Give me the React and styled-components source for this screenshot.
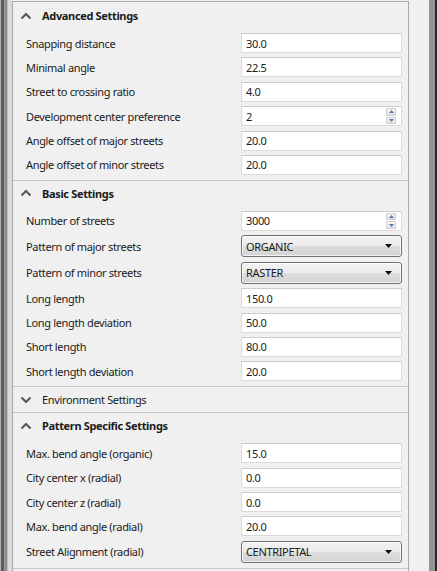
import React from 'react'
import styled, { createGlobalStyle } from 'styled-components'

const GlobalStyle = createGlobalStyle`
  html, body {
    margin: 0;
    padding: 0;
    background: #f0f0f0;
  }
  * { box-sizing: border-box; }
`

const Page = styled.div`
  display: flex;
  width: 437px;
  height: 571px;
  overflow: hidden;
  font-family: "Noto Sans", "Open Sans", sans-serif;
  font-size: 11px;
  letter-spacing: -0.34px;
  color: #1a1a1a;
  background: #f0f0f0;
`

const LeftEdge = styled.div`
  width: 12px;
  flex-shrink: 0;
  background: linear-gradient(
    to right,
    #b4b4b4 0px, #b4b4b4 1px,
    #5c5c5c 1px, #5c5c5c 4px,
    #9a9a9a 4px, #9a9a9a 5px,
    #8c8c8c 5px, #8c8c8c 7px,
    #bdbdbd 7px, #bdbdbd 8px,
    #dcdcdc 8px
  );
`

const Panel = styled.div`
  width: 397px;
  flex-shrink: 0;
  margin-top: 1px;
  padding-top: 1px;
  border: 1px solid #a9a9a9;
  border-bottom: none;
  background: #f0f0f0;
  overflow: hidden;
`

const RightGutter = styled.div`
  width: 20px;
  flex-shrink: 0;
  background: #f0f0f0;
`

const ScrollStrip = styled.div`
  width: 6px;
  flex-shrink: 0;
  background: repeating-linear-gradient(to bottom, #8f8f8f 0px, #8f8f8f 1px, #999 1px, #999 2px);
`

const DarkEdge = styled.div`
  flex: 1;
  background: #2a2a2a;
`

const Section = styled.section`
  border-bottom: 1px solid #c6c6c6;
`

const Header = styled.div`
  display: flex;
  align-items: center;
  height: 25px;
  padding-left: 7px;
  gap: 10px;
  font-weight: ${p => (p.$open ? 700 : 400)};
  color: #1a1a1a;
`

const Chevron = styled.svg`
  width: 12px;
  height: 8px;
  flex-shrink: 0;
`

const Fields = styled.div`
  display: flex;
  flex-direction: column;
  gap: 4.4px;
  padding: 5px 0 5px;
`

const Row = styled.div`
  display: grid;
  grid-template-columns: 1fr 161px;
  align-items: center;
  padding: 0 6px 0 13px;
`

const Label = styled.span`
  white-space: nowrap;
`

const TextBox = styled.div`
  position: relative;
  height: 20px;
  display: flex;
  align-items: center;
  padding-left: 4px;
  background: #fff;
  border: 1px solid #dadada;
  border-top-color: #cbcbcb;
`

const Spin = styled.div`
  position: absolute;
  right: 5px;
  top: 1px;
  bottom: 1px;
  width: 10px;
  display: flex;
  flex-direction: column;
  gap: 1px;
`

const SpinButton = styled.div`
  flex: 1;
  display: flex;
  align-items: center;
  justify-content: center;
  background: linear-gradient(#f6f6f6, #e2e2e2);
  border: 1px solid #cfcfcf;
  border-radius: 1px;
`

const Combo = styled.div`
  height: 22px;
  display: flex;
  align-items: center;
  justify-content: space-between;
  padding: 0 9px 0 4px;
  border: 1px solid #727272;
  border-radius: 3px;
  background: linear-gradient(#f3f3f3 0%, #ebebeb 50%, #dddddd 50%, #d3d3d3 100%);
  box-shadow: inset 0 0 0 1px rgba(255, 255, 255, 0.7);
`

const ChevronIcon = ({ up }) => (
  <Chevron viewBox="0 0 12 8">
    <path
      d={up ? 'M1.5 6.5 L6 2 L10.5 6.5' : 'M1.5 1.5 L6 6 L10.5 1.5'}
      fill="none"
      stroke="#5a5a5a"
      strokeWidth="2.2"
    />
  </Chevron>
)

const Triangle = ({ up, color = '#5b7fa6', w = 5, h = 3 }) => (
  <svg width={w} height={h} viewBox="0 0 5 3">
    <path d={up ? 'M0 3 L2.5 0 L5 3 Z' : 'M0 0 L5 0 L2.5 3 Z'} fill={color} />
  </svg>
)

const Field = ({ label, value, kind }) => (
  <Row>
    <Label>{label}</Label>
    {kind === 'combo' ? (
      <Combo>
        <span>{value}</span>
        <svg width="7" height="4" viewBox="0 0 7 4">
          <path d="M0 0 L7 0 L3.5 4 Z" fill="#111" />
        </svg>
      </Combo>
    ) : (
      <TextBox>
        {value}
        {kind === 'spin' && (
          <Spin>
            <SpinButton><Triangle up /></SpinButton>
            <SpinButton><Triangle /></SpinButton>
          </Spin>
        )}
      </TextBox>
    )}
  </Row>
)

const sections = [
  {
    title: 'Advanced Settings',
    open: true,
    fields: [
      ['Snapping distance', '30.0'],
      ['Minimal angle', '22.5'],
      ['Street to crossing ratio', '4.0'],
      ['Development center preference', '2', 'spin'],
      ['Angle offset of major streets', '20.0'],
      ['Angle offset of minor streets', '20.0'],
    ],
  },
  {
    title: 'Basic Settings',
    open: true,
    fields: [
      ['Number of streets', '3000', 'spin'],
      ['Pattern of major streets', 'ORGANIC', 'combo'],
      ['Pattern of minor streets', 'RASTER', 'combo'],
      ['Long length', '150.0'],
      ['Long length deviation', '50.0'],
      ['Short length', '80.0'],
      ['Short length deviation', '20.0'],
    ],
  },
  { title: 'Environment Settings', open: false, fields: [] },
  {
    title: 'Pattern Specific Settings',
    open: true,
    fields: [
      ['Max. bend angle (organic)', '15.0'],
      ['City center x (radial)', '0.0'],
      ['City center z (radial)', '0.0'],
      ['Max. bend angle (radial)', '20.0'],
      ['Street Alignment (radial)', 'CENTRIPETAL', 'combo'],
    ],
  },
]

const App = () => {
  return (
    <>
      <GlobalStyle />
      <Page>
        <LeftEdge />
        <Panel>
          {sections.map(s => (
            <Section key={s.title}>
              <Header $open={s.open}>
                <ChevronIcon up={s.open} />
                {s.title}
              </Header>
              {s.open && (
                <Fields>
                  {s.fields.map(([label, value, kind]) => (
                    <Field key={label} label={label} value={value} kind={kind} />
                  ))}
                </Fields>
              )}
            </Section>
          ))}
        </Panel>
        <RightGutter />
        <ScrollStrip />
        <DarkEdge />
      </Page>
    </>
  )
}

export default App
